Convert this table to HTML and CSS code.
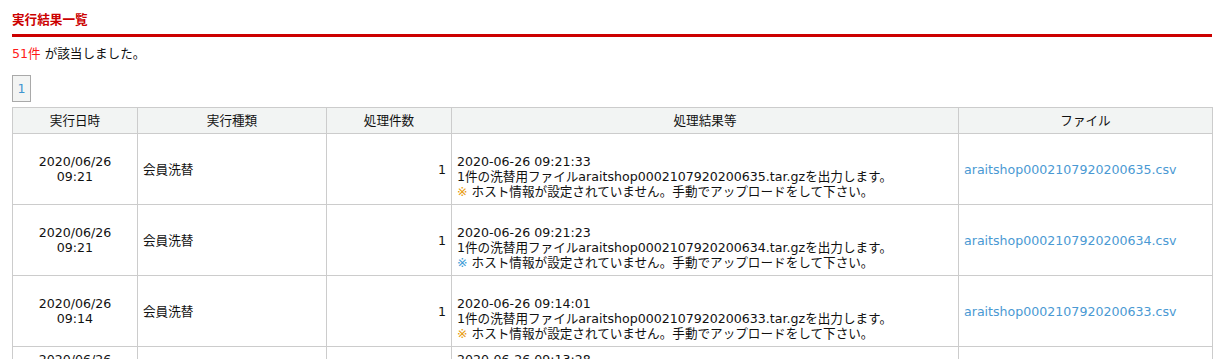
FILE: index.html
```html
<!DOCTYPE html>
<html lang="ja">
<head>
<meta charset="utf-8">
<title>実行結果一覧</title>
<link rel="stylesheet" href="styles.css">
</head>
<body>
<div class="page">
  <h2 class="title">実行結果一覧</h2>
  <p class="count"><span class="num">51件</span> が該当しました。</p>
  <div class="pager"><span class="page-no">1</span></div>
  <table class="results">
    <colgroup>
      <col class="c1"><col class="c2"><col class="c3"><col class="c4"><col class="c5">
    </colgroup>
    <thead>
      <tr><th>実行日時</th><th>実行種類</th><th>処理件数</th><th>処理結果等</th><th>ファイル</th></tr>
    </thead>
    <tbody>
      <tr>
        <td class="date">2020/06/26<br>09:21</td>
        <td class="type">会員洗替</td>
        <td class="qty">1</td>
        <td class="msg"><br>2020-06-26 09:21:33<br>1件の洗替用ファイルaraitshop0002107920200635.tar.gzを出力します。<br><span class="mark warn">※</span> ホスト情報が設定されていません。手動でアップロードをして下さい。</td>
        <td class="file"><a href="#">araitshop0002107920200635.csv</a></td>
      </tr>
      <tr>
        <td class="date">2020/06/26<br>09:21</td>
        <td class="type">会員洗替</td>
        <td class="qty">1</td>
        <td class="msg"><br>2020-06-26 09:21:23<br>1件の洗替用ファイルaraitshop0002107920200634.tar.gzを出力します。<br><span class="mark info">※</span> ホスト情報が設定されていません。手動でアップロードをして下さい。</td>
        <td class="file"><a href="#">araitshop0002107920200634.csv</a></td>
      </tr>
      <tr>
        <td class="date">2020/06/26<br>09:14</td>
        <td class="type">会員洗替</td>
        <td class="qty">1</td>
        <td class="msg"><br>2020-06-26 09:14:01<br>1件の洗替用ファイルaraitshop0002107920200633.tar.gzを出力します。<br><span class="mark warn">※</span> ホスト情報が設定されていません。手動でアップロードをして下さい。</td>
        <td class="file"><a href="#">araitshop0002107920200633.csv</a></td>
      </tr>
      <tr>
        <td class="date">2020/06/26<br>09:13</td>
        <td class="type">会員洗替</td>
        <td class="qty">1</td>
        <td class="msg">2020-06-26 09:13:28<br>1件の洗替用ファイルaraitshop0002107920200632.tar.gzを出力します。</td>
        <td class="file"><a href="#">araitshop0002107920200632.csv</a></td>
      </tr>
    </tbody>
  </table>
</div>
</body>
</html>
```

FILE: styles.css
```css
html, body {
  margin: 0;
  padding: 0;
  background: #fff;
}
body {
  font-family: "DejaVu Sans", "Noto Sans CJK JP", sans-serif;
  font-size: 12.6px;
  line-height: 15px;
  color: #111;
}
.page {
  padding: 0 11px 0 12px;
}
.title {
  margin: 0;
  padding: 12px 0 7px;
  font-size: 12.6px;
  line-height: 15px;
  font-weight: bold;
  color: #cc0000;
  border-bottom: 3px solid #cc0000;
}
.count {
  margin: 9px 0 0;
}
.num {
  color: #ff1a1a;
}
.pager {
  margin-top: 14px;
  display: flex;
}
.page-no {
  display: flex;
  align-items: center;
  justify-content: center;
  width: 17px;
  height: 25px;
  border: 1px solid #a9a9a9;
  background: #f3f4f3;
  color: #3f95d0;
}
.results {
  margin-top: 5px;
  width: 1200px;
  border-collapse: collapse;
  table-layout: fixed;
}
.c1 { width: 125px; }
.c2 { width: 189px; }
.c3 { width: 125px; }
.c4 { width: 507px; }
.c5 { width: 254px; }
.results th,
.results td {
  border: 1px solid #cccccc;
  padding: 5px 5px;
  vertical-align: middle;
  font-weight: normal;
}
.results th {
  background: #f2f4f3;
  text-align: center;
  height: 15px;
}
.results td {
  height: 60px;
}
.results tbody tr:last-child td {
  height: 30px;
}
.date { text-align: center; }
.type { text-align: left; }
.qty { text-align: right; padding-right: 6px; }
.msg { text-align: left; white-space: nowrap; }
.file a {
  color: #4a99d3;
  text-decoration: none;
}
.mark.warn { color: #e89a0c; }
.mark.info { color: #3a9ad6; }
```
